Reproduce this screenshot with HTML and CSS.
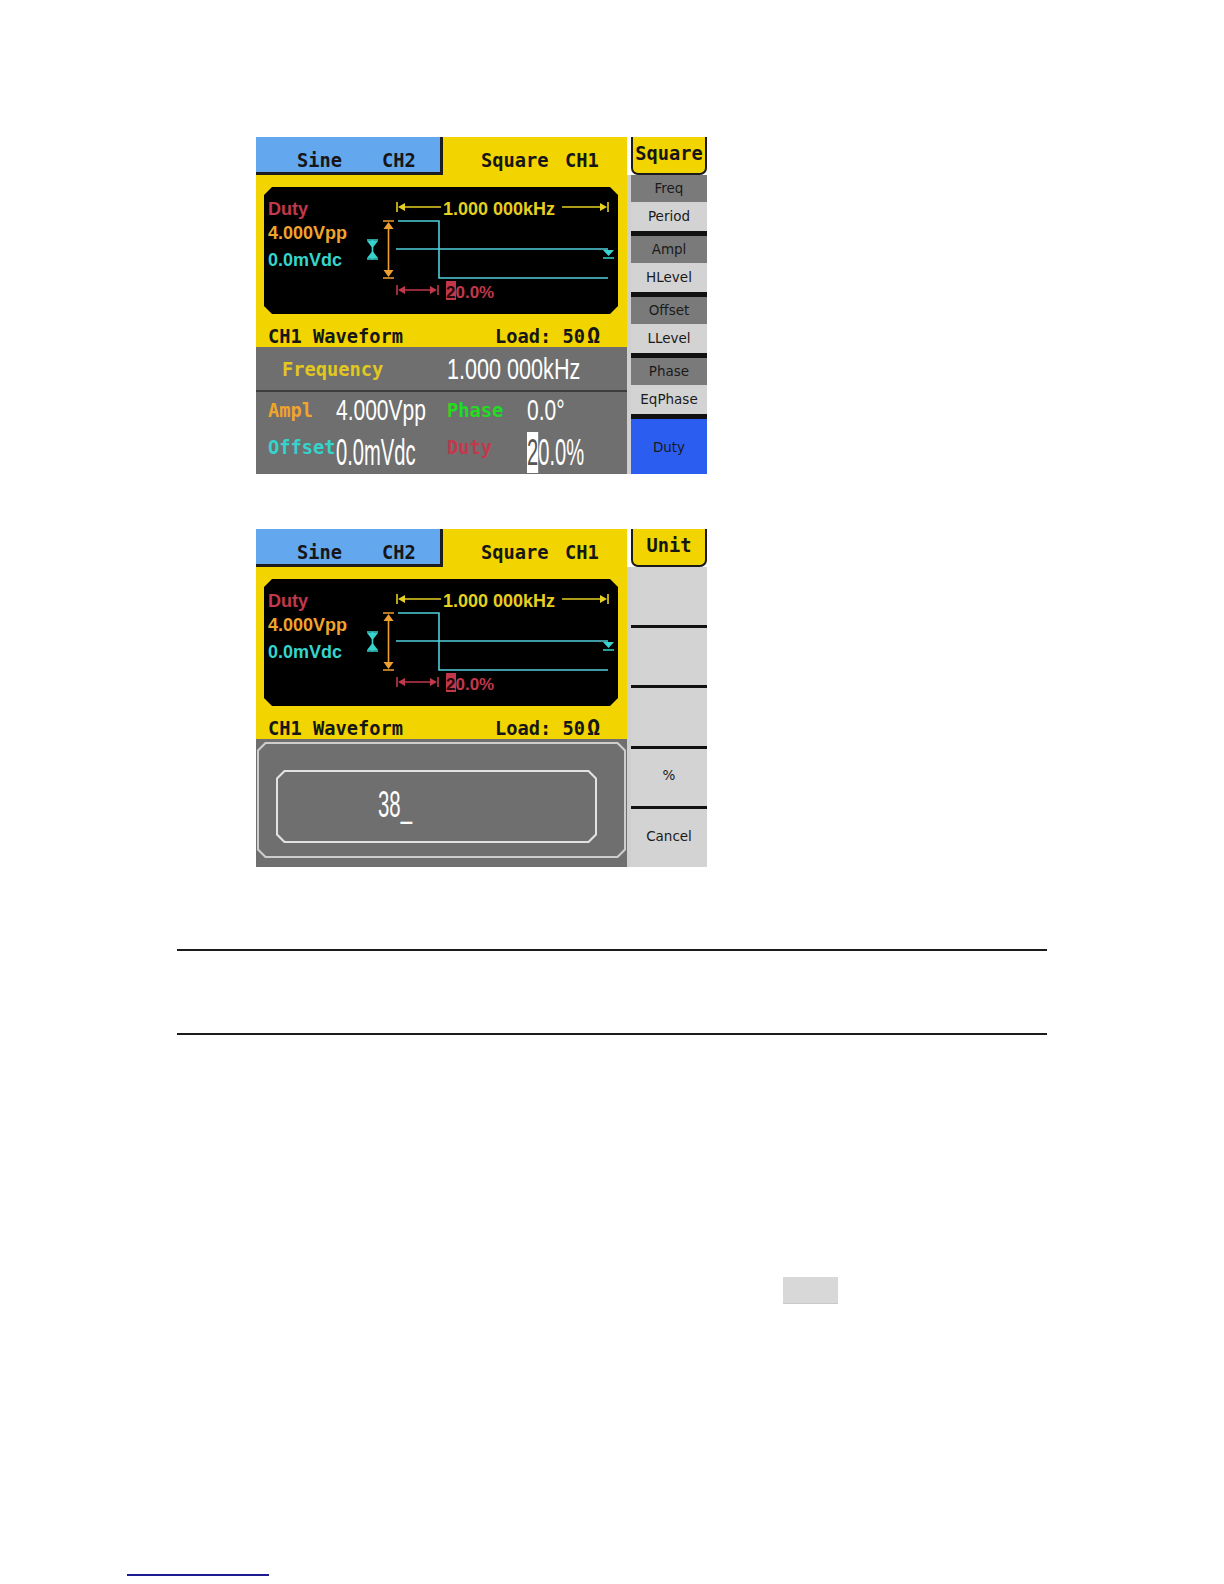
FILE: index.html
```html
<!DOCTYPE html>
<html lang="en">
<head>
    <meta charset="UTF-8">
    <title>Square Duty Setting</title>
    <link rel="stylesheet" href="styles.css">
</head>
<body>
<div class="page">

    <!-- Screen 1: square wave parameters -->
    <div class="shot">
        <div class="screen">
            <div class="tabs">
                <div class="tab tab-back"><span class="tab-name">Sine</span><span>CH2</span></div>
                <div class="tab tab-front"><span class="tab-name">Square</span><span>CH1</span></div>
            </div>
            <div class="wave-area">
                <div class="display chamfer">
                    <div class="readout">
                        <div class="c-red">Duty</div>
                        <div class="c-orange">4.000Vpp</div>
                        <div class="c-cyan r-last">0.0mVdc</div>
                    </div>
                    <svg class="trace" width="252" height="127" viewBox="0 0 252 127">
                        <g stroke="#e6cf1e" fill="#e6cf1e" stroke-width="1.6">
                            <line x1="32" y1="15" x2="32" y2="25"/>
                            <path d="M33 20 l7 -4 v8 z" stroke="none"/>
                            <line x1="38" y1="20" x2="76" y2="20"/>
                            <line x1="197" y1="20" x2="237" y2="20"/>
                            <path d="M242 20 l-7 -4 v8 z" stroke="none"/>
                            <line x1="243" y1="15" x2="243" y2="25"/>
                        </g>
                        <text x="78" y="28" class="t-freq">1.000 000kHz</text>
                        <g stroke="#f0a030" fill="#f0a030" stroke-width="1.6">
                            <line x1="18" y1="34" x2="29" y2="34"/>
                            <path d="M23.5 35 l-5 7 h10 z" stroke="none"/>
                            <line x1="23.5" y1="40" x2="23.5" y2="85"/>
                            <path d="M23.5 90 l-5 -7 h10 z" stroke="none"/>
                            <line x1="18" y1="91" x2="29" y2="91"/>
                        </g>
                        <g stroke="#36d4cc" fill="#36d4cc" stroke-width="1.6">
                            <line x1="2" y1="53" x2="13" y2="53"/>
                            <path d="M2 54 h11 l-5.5 7 z" stroke="none"/>
                            <path d="M2 71 h11 l-5.5 -7 z" stroke="none"/>
                            <line x1="2" y1="72" x2="13" y2="72"/>
                            <line x1="7.5" y1="53" x2="7.5" y2="72"/>
                        </g>
                        <g fill="none" stroke="#4fd0dc" stroke-width="1.6">
                            <path d="M33 34 H74 V91 H243"/>
                            <path d="M31 62 H243"/>
                        </g>
                        <path d="M238 63 h11 l-5.5 6 z" fill="#36d4cc"/>
                        <line x1="238" y1="71" x2="249" y2="71" stroke="#36d4cc" stroke-width="1.6"/>
                        <g stroke="#c0384a" fill="#c0384a" stroke-width="1.6">
                            <line x1="32" y1="98" x2="32" y2="108"/>
                            <path d="M33 103 l7 -4 v8 z" stroke="none"/>
                            <line x1="38" y1="103" x2="67" y2="103"/>
                            <path d="M72 103 l-7 -4 v8 z" stroke="none"/>
                            <line x1="73" y1="98" x2="73" y2="108"/>
                        </g>
                        <rect x="81" y="94" width="10" height="19" fill="#c0384a"/>
                        <text x="81" y="111" class="t-duty"><tspan fill="#2a0508">2</tspan>0.0%</text>
                    </svg>
                </div>
                <div class="strip"><span class="strip-title">CH1 Waveform</span><span>Load: 50<span class="ohm">Ω</span></span></div>
            </div>
            <div class="params">
                <div class="freq-row">
                    <span class="p-label freq-label">Frequency</span><span class="lcd lcd-freq">1.000 000kHz</span>
                </div>
                <div class="param-row">
                    <span class="p-label col-a c-orange">Ampl</span><span class="p-value"><span class="lcd">4.000Vpp</span></span><span class="p-label col-c c-green">Phase</span><span class="p-value"><span class="lcd">0.0°</span></span>
                </div>
                <div class="param-row tall">
                    <span class="p-label col-a c-cyan">Offset</span><span class="p-value"><span class="lcd lcd-tall">0.0mVdc</span></span><span class="p-label col-c c-red">Duty</span><span class="p-value"><span class="lcd lcd-tall"><span class="cursor">2</span>0.0%</span></span>
                </div>
            </div>
        </div>
        <div class="softkeys">
            <div class="softkey-title">Square</div>
            <div class="key-group"><div class="key-main">Freq</div><div class="key-alt">Period</div></div>
            <div class="key-group"><div class="key-main">Ampl</div><div class="key-alt">HLevel</div></div>
            <div class="key-group"><div class="key-main">Offset</div><div class="key-alt">LLevel</div></div>
            <div class="key-group"><div class="key-main">Phase</div><div class="key-alt">EqPhase</div></div>
            <div class="key-active">Duty</div>
        </div>
    </div>

    <!-- Screen 2: entering the duty value -->
    <div class="shot shot-entry">
        <div class="screen">
            <div class="tabs">
                <div class="tab tab-back"><span class="tab-name">Sine</span><span>CH2</span></div>
                <div class="tab tab-front"><span class="tab-name">Square</span><span>CH1</span></div>
            </div>
            <div class="wave-area">
                <div class="display chamfer">
                    <div class="readout">
                        <div class="c-red">Duty</div>
                        <div class="c-orange">4.000Vpp</div>
                        <div class="c-cyan r-last">0.0mVdc</div>
                    </div>
                    <svg class="trace" width="252" height="127" viewBox="0 0 252 127">
                        <g stroke="#e6cf1e" fill="#e6cf1e" stroke-width="1.6">
                            <line x1="32" y1="15" x2="32" y2="25"/>
                            <path d="M33 20 l7 -4 v8 z" stroke="none"/>
                            <line x1="38" y1="20" x2="76" y2="20"/>
                            <line x1="197" y1="20" x2="237" y2="20"/>
                            <path d="M242 20 l-7 -4 v8 z" stroke="none"/>
                            <line x1="243" y1="15" x2="243" y2="25"/>
                        </g>
                        <text x="78" y="28" class="t-freq">1.000 000kHz</text>
                        <g stroke="#f0a030" fill="#f0a030" stroke-width="1.6">
                            <line x1="18" y1="34" x2="29" y2="34"/>
                            <path d="M23.5 35 l-5 7 h10 z" stroke="none"/>
                            <line x1="23.5" y1="40" x2="23.5" y2="85"/>
                            <path d="M23.5 90 l-5 -7 h10 z" stroke="none"/>
                            <line x1="18" y1="91" x2="29" y2="91"/>
                        </g>
                        <g stroke="#36d4cc" fill="#36d4cc" stroke-width="1.6">
                            <line x1="2" y1="53" x2="13" y2="53"/>
                            <path d="M2 54 h11 l-5.5 7 z" stroke="none"/>
                            <path d="M2 71 h11 l-5.5 -7 z" stroke="none"/>
                            <line x1="2" y1="72" x2="13" y2="72"/>
                            <line x1="7.5" y1="53" x2="7.5" y2="72"/>
                        </g>
                        <g fill="none" stroke="#4fd0dc" stroke-width="1.6">
                            <path d="M33 34 H74 V91 H243"/>
                            <path d="M31 62 H243"/>
                        </g>
                        <path d="M238 63 h11 l-5.5 6 z" fill="#36d4cc"/>
                        <line x1="238" y1="71" x2="249" y2="71" stroke="#36d4cc" stroke-width="1.6"/>
                        <g stroke="#c0384a" fill="#c0384a" stroke-width="1.6">
                            <line x1="32" y1="98" x2="32" y2="108"/>
                            <path d="M33 103 l7 -4 v8 z" stroke="none"/>
                            <line x1="38" y1="103" x2="67" y2="103"/>
                            <path d="M72 103 l-7 -4 v8 z" stroke="none"/>
                            <line x1="73" y1="98" x2="73" y2="108"/>
                        </g>
                        <rect x="81" y="94" width="10" height="19" fill="#c0384a"/>
                        <text x="81" y="111" class="t-duty"><tspan fill="#2a0508">2</tspan>0.0%</text>
                    </svg>
                </div>
                <div class="strip"><span class="strip-title">CH1 Waveform</span><span>Load: 50<span class="ohm">Ω</span></span></div>
            </div>
            <div class="entry">
                <div class="entry-frame chamfer">
                    <div class="entry-body chamfer">
                        <div class="entry-box chamfer">
                            <div class="entry-field chamfer"><span class="lcd lcd-entry">38_</span></div>
                        </div>
                    </div>
                </div>
            </div>
        </div>
        <div class="softkeys">
            <div class="softkey-title">Unit</div>
            <div class="key-blank"></div>
            <div class="key-blank"></div>
            <div class="key-blank"></div>
            <div class="key-blank">%</div>
            <div class="key-blank">Cancel</div>
        </div>
    </div>

    <div class="rule"></div>
    <div class="rule"></div>

    <div class="key-chip"></div>

    <a class="foot-link" href="#"></a>

</div>
</body>
</html>
```

FILE: styles.css
```css
body {
    margin: 0;
    background-color: #fff;
    font-family: "DejaVu Sans", sans-serif;
}
.page {
    padding-top: 137px;
}
.shot {
    display: flex;
    width: 451px;
    height: 337px;
    margin-left: 256px;
}
.shot-entry {
    height: 338px;
    margin-top: 55px;
}
.screen {
    width: 371px;
    display: flex;
    flex-direction: column;
    background-color: #f1d400;
}
.chamfer {
    --c: 8px;
    clip-path: polygon(var(--c) 0, calc(100% - var(--c)) 0, 100% var(--c), 100% calc(100% - var(--c)), calc(100% - var(--c)) 100%, var(--c) 100%, 0 calc(100% - var(--c)), 0 var(--c));
}

/* tabs */
.tabs {
    display: flex;
    height: 38px;
    flex-shrink: 0;
}
.tab {
    box-sizing: border-box;
    padding-top: 13px;
    font: bold 18.7px/22px "DejaVu Sans Mono", monospace;
    color: #161616;
    white-space: nowrap;
}
.tab-back {
    width: 187px;
    padding-left: 41px;
    background-color: #63a7ee;
    border-right: 3px solid #1d1d1d;
    border-bottom: 3px solid #1d1d1d;
}
.tab-front {
    flex: 1;
    padding-left: 38px;
}
.tab-name {
    display: inline-block;
    width: 85px;
}
.tab-front .tab-name {
    width: 84px;
}

/* waveform display */
.wave-area {
    height: 172px;
    flex-shrink: 0;
}
.display {
    display: flex;
    height: 127px;
    margin: 12px 9px 0 8px;
    background-color: #000;
}
.readout {
    width: 101px;
    box-sizing: border-box;
    padding: 10px 0 0 4px;
    font: bold 18px/24px "Liberation Sans", sans-serif;
}
.r-last {
    margin-top: 3px;
}
.trace {
    display: block;
    overflow: visible;
}
.t-freq {
    font: bold 18px "Liberation Sans", sans-serif;
    fill: #e6cf1e;
}
.t-duty {
    font: bold 17px "Liberation Sans", sans-serif;
    fill: #c0384a;
}
.c-red { color: #c4384c; }
.c-orange { color: #f0a42c; }
.c-cyan { color: #34d4cc; }
.c-green { color: #22dc22; }
.strip {
    height: 33px;
    box-sizing: border-box;
    padding: 11px 0 0 12px;
    font: bold 18.7px/22px "DejaVu Sans Mono", monospace;
    color: #161616;
    white-space: nowrap;
}
.strip-title {
    display: inline-block;
    width: 227px;
}
.ohm {
    margin-left: 2px;
    font-size: 22px;
}

/* parameter list */
.params {
    flex: 1;
    background-color: #6f6f6f;
    overflow: hidden;
}
.freq-row {
    height: 43px;
    border-bottom: 2px solid #3d3d3d;
    padding-left: 26px;
    font: 30px/43px "Liberation Sans", sans-serif;
    white-space: nowrap;
}
.p-label {
    display: inline-block;
    font: bold 18.7px/22px "DejaVu Sans Mono", monospace;
    vertical-align: 3px;
}
.freq-label {
    width: 165px;
    color: #e2c81e;
}
.lcd {
    display: inline-block;
    color: #fff;
    transform: scaleX(.7);
    transform-origin: 0 0;
}
.lcd-freq {
    transform: scaleX(.72);
}
.lcd-tall {
    transform: scaleX(.56);
}
.param-row {
    padding-left: 12px;
    font: 30px/36px "Liberation Sans", sans-serif;
    white-space: nowrap;
}
.param-row.tall {
    margin-top: 3px;
    font-size: 36px;
    line-height: 44px;
}
.param-row.tall .p-label {
    vertical-align: 11px;
}
.col-a {
    width: 68px;
}
.col-c {
    width: 80px;
}
.p-value {
    display: inline-block;
    width: 111px;
}
.cursor {
    background-color: #fff;
    color: #555;
}

/* number entry */
.entry {
    flex: 1;
    display: flex;
    flex-direction: column;
    padding: 3px 1px 9px;
    background-color: #6f6f6f;
}
.entry-frame {
    flex: 1;
    padding: 2px;
    background-color: #cdcdcd;
}
.entry-body {
    --c: 7px;
    height: 100%;
    box-sizing: border-box;
    padding: 26px 27px 13px 17px;
    background-color: #6f6f6f;
}
.entry-box {
    padding: 2px;
    background-color: #e2e2e2;
}
.entry-field {
    --c: 7px;
    height: 69px;
    padding-left: 100px;
    background-color: #6f6f6f;
    font: 37px/65px "Liberation Sans", sans-serif;
    white-space: nowrap;
}
.lcd-entry {
    transform: scaleX(.55);
}

/* soft keys */
.softkeys {
    width: 80px;
    box-sizing: border-box;
    padding-left: 4px;
    display: flex;
    flex-direction: column;
    background: linear-gradient(#fff 38px, #cfcfcf 38px);
    font: 13.5px "DejaVu Sans", sans-serif;
    color: #1a1a1a;
    text-align: center;
}
.softkey-title {
    height: 38px;
    flex-shrink: 0;
    box-sizing: border-box;
    background-color: #f1d400;
    border: 2px solid #1a1a1a;
    border-top: none;
    border-radius: 0 0 7px 7px;
    font: bold 18.7px/34px "DejaVu Sans Mono", monospace;
    color: #161616;
}
.key-group {
    height: 61px;
    flex-shrink: 0;
    box-sizing: border-box;
    display: flex;
    flex-direction: column;
    border-bottom: 5px solid #111;
}
.key-main {
    height: 27px;
    line-height: 27px;
    background-color: #7a7a7a;
}
.key-alt {
    flex: 1;
    line-height: 29px;
    background-color: #d3d3d3;
}
.key-active {
    flex: 1;
    display: flex;
    align-items: center;
    justify-content: center;
    background-color: #2b5ef0;
}
.key-blank {
    flex: 1;
    display: flex;
    align-items: center;
    justify-content: center;
    padding-bottom: 5px;
    background-color: #d3d3d3;
}
.key-blank + .key-blank {
    border-top: 3px solid #111;
}

/* page below the screens */
.rule {
    width: 870px;
    margin: 82px 0 0 177px;
    border-top: 2px solid #1b1b1b;
}
.key-chip {
    width: 55px;
    height: 26px;
    margin: 242px 0 0 783px;
    background-color: #d8d8d8;
    border-bottom: 1px solid #c8c8c8;
}
.foot-link {
    display: block;
    width: 142px;
    margin: 270px 0 0 127px;
    border-bottom: 2px solid #1c1c90;
}
```
